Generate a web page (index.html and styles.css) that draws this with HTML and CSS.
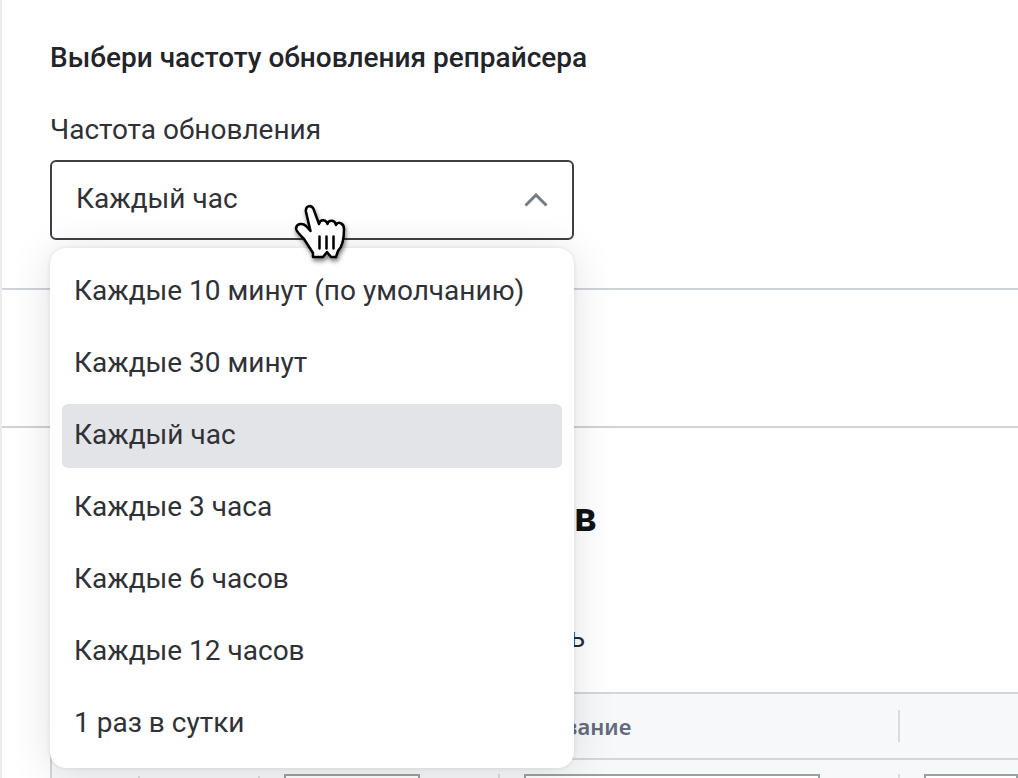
FILE: index.html
```html
<!DOCTYPE html>
<html lang="ru">
<head>
<meta charset="utf-8">
<meta name="viewport" content="width=device-width, initial-scale=1">
<title>Репрайсер</title>
<link rel="stylesheet" href="styles.css">
</head>
<body>
<main class="page">
  <section class="section section-frequency">
    <h2 class="title">Выбери частоту обновления репрайсера</h2>
    <label class="label" for="frequency">Частота обновления</label>
    <div class="dropdown">
      <select class="control" id="frequency">
        <option>Каждые 10 минут (по умолчанию)</option>
        <option>Каждые 30 минут</option>
        <option selected>Каждый час</option>
        <option>Каждые 3 часа</option>
        <option>Каждые 6 часов</option>
        <option>Каждые 12 часов</option>
        <option>1 раз в сутки</option>
      </select>
      <svg class="chevron" viewBox="0 0 24 14" aria-hidden="true"><path d="M1.500 12.500 12 2l10.500 10.500"/></svg>
      <div class="menu" role="listbox" aria-label="Частота обновления">
        <button class="option" role="option" type="button">Каждые 10 минут (по умолчанию)</button>
        <button class="option" role="option" type="button">Каждые 30 минут</button>
        <button class="option option-selected" role="option" aria-selected="true" type="button">Каждый час</button>
        <button class="option" role="option" type="button">Каждые 3 часа</button>
        <button class="option" role="option" type="button">Каждые 6 часов</button>
        <button class="option" role="option" type="button">Каждые 12 часов</button>
        <button class="option" role="option" type="button">1 раз в сутки</button>
      </div>
      <svg class="pointer" viewBox="0 0 56 60" aria-hidden="true">
        <path d="M20 50 11 36C8 32 3 29 3 25C4 20 10 20 13 23L17.500 28L13 9C12 3 18 1 20.500 6L26 21C27 16 33 16 34.500 21C36 16 42 17 43 22C45 18 51 20 51 26C51 37 49 44 45 48L43 54H38L34 49L30 54H20Z"/>
        <path d="M26.500 33.500v12M33.500 33.500v12M40.500 33.500v12"/>
      </svg>
    </div>
  </section>
  <section class="section section-empty"></section>
  <section class="section-products">
    <h2 class="heading">в</h2>
    <p class="note">ь</p>
    <table class="table">
      <colgroup><col class="col-check"><col class="col-photo"><col class="col-code"><col class="col-name"><col></colgroup>
      <thead>
        <tr><th></th><th></th><th></th><th><span class="cell">Название</span></th><th></th></tr>
      </thead>
      <tbody>
        <tr>
          <td><span class="cell cell-filter"></span></td>
          <td><span class="cell cell-filter"></span></td>
          <td><span class="cell cell-filter"><input class="filter filter-code" aria-label="Фильтр по коду"></span></td>
          <td><span class="cell cell-filter"><input class="filter filter-name" aria-label="Фильтр по названию"></span></td>
          <td><span class="cell cell-filter"><input class="filter" aria-label="Фильтр"></span></td>
        </tr>
      </tbody>
    </table>
  </section>
</main>
</body>
</html>
```
FILE: styles.css
```css
* { box-sizing: border-box; }
body {
  margin: 0;
  background: #fff;
  color: #303136;
  font: 28px/32px Roboto, "Noto Sans", sans-serif;
}
.page {
  height: 100vh;
  overflow: hidden;
  border-left: 2px solid #ececec;
}
.section { border-bottom: 2px solid #cfd2d6; }
.section-frequency { padding: 42px 48px 48px; }
.section-empty { height: 138px; }
.title {
  margin: 0 0 40px;
  color: #232429;
  font-size: 28px;
  line-height: 32px;
  font-weight: 500;
}
.label { display: block; margin-bottom: 14px; }
.dropdown { position: relative; max-width: 524px; }
.control {
  display: block;
  width: 100%;
  height: 80px;
  padding: 0 24px 2px;
  border: 2px solid #3f4046;
  border-radius: 6px;
  background: #fff;
  color: inherit;
  font: inherit;
  appearance: none;
}
.chevron {
  position: absolute;
  top: 33px;
  right: 26px;
  width: 24px;
  height: 14px;
  fill: none;
  stroke: #737985;
  stroke-width: 3;
  pointer-events: none;
}
.menu {
  position: absolute;
  top: 88px;
  left: 0;
  z-index: 1;
  display: grid;
  gap: 8px;
  width: 100%;
  padding: 12px;
  border-radius: 16px;
  background: #fff;
  box-shadow: 0 0 4px rgba(0, 0, 0, .1), 0 4px 44px rgba(0, 0, 0, .12);
}
.option {
  height: 64px;
  padding: 0 12px 2px;
  border: 0;
  border-radius: 6px;
  background: none;
  color: inherit;
  font: inherit;
  text-align: left;
}
.option-selected { background: #e3e4e8; }
.pointer {
  position: absolute;
  top: 43px;
  left: 243px;
  z-index: 2;
  width: 56px;
  height: 60px;
  fill: #fff;
  stroke: #000;
  stroke-width: 2.5;
  stroke-linejoin: round;
  stroke-linecap: round;
  filter: drop-shadow(1px 3px 2px rgba(0, 0, 0, .5));
  pointer-events: none;
}
.section-products { padding: 66px 0 0 48px; }
.heading {
  margin: 0 0 80px;
  padding-left: 524px;
  color: #111216;
  font-size: 40px;
  line-height: 48px;
  font-weight: 700;
}
.note {
  margin: 0;
  padding: 0 0 38px 520px;
  color: #232c3c;
}
.table {
  width: 100%;
  border: 2px solid #d2d6dd;
  border-width: 2px 0 0 2px;
  border-spacing: 0;
  table-layout: fixed;
  background: #f7f8fa;
}
.table th, .table td { padding: 0; text-align: left; }
.table th { height: 66px; border-bottom: 2px solid #d2d6dd; }
.col-check { width: 88px; }
.col-photo { width: 120px; }
.col-code { width: 240px; }
.col-name { width: 400px; }
.cell {
  display: block;
  height: 32px;
  padding-left: 24px;
  border-right: 2px solid #d9dbdf;
  color: #646b7a;
  font: 600 22px/32px "Noto Sans", sans-serif;
}
.table tr > :last-child .cell { border-right: 0; }
.cell-filter { margin-top: 16px; }
.filter {
  display: block;
  width: 100%;
  height: 40px;
  margin: -4px 0;
  border: 2px solid #94a3a2;
  background: #fff;
}
.filter-code { width: 136px; }
.filter-name { width: 296px; }
```
